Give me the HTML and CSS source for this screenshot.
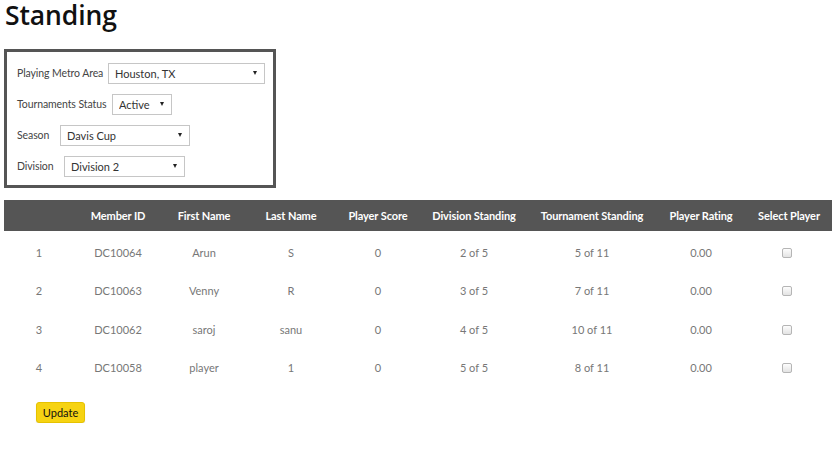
FILE: index.html
```html
<!DOCTYPE html>
<html lang="en">
<head>
<meta charset="utf-8">
<title>Standing</title>
<link rel="stylesheet" href="styles.css">
</head>
<body>
  <h1 class="page-title">Standing</h1>

  <form class="filters">
    <div class="filter-row">
      <label class="filter-label label-metro" for="metro">Playing Metro Area</label>
      <span class="select-wrap sel-metro">
        <select id="metro"><option>Houston, TX</option></select>
      </span>
    </div>
    <div class="filter-row">
      <label class="filter-label label-status" for="status">Tournaments Status</label>
      <span class="select-wrap sel-status">
        <select id="status"><option>Active</option></select>
      </span>
    </div>
    <div class="filter-row">
      <label class="filter-label label-season" for="season">Season</label>
      <span class="select-wrap sel-season">
        <select id="season"><option>Davis Cup</option></select>
      </span>
    </div>
    <div class="filter-row">
      <label class="filter-label label-division" for="division">Division</label>
      <span class="select-wrap sel-division">
        <select id="division"><option>Division 2</option></select>
      </span>
    </div>
  </form>

  <table class="standings">
    <colgroup>
      <col class="c-rank"><col class="c-id"><col class="c-first"><col class="c-last"><col class="c-score">
      <col class="c-div"><col class="c-tour"><col class="c-rating"><col class="c-select">
    </colgroup>
    <thead>
      <tr>
        <th></th>
        <th>Member ID</th>
        <th>First Name</th>
        <th>Last Name</th>
        <th>Player Score</th>
        <th>Division Standing</th>
        <th>Tournament Standing</th>
        <th>Player Rating</th>
        <th>Select Player</th>
      </tr>
    </thead>
    <tbody>
      <tr>
        <td>1</td><td>DC10064</td><td>Arun</td><td>S</td><td>0</td>
        <td>2 of 5</td><td>5 of 11</td><td>0.00</td><td><input type="checkbox" class="pick"></td>
      </tr>
      <tr>
        <td>2</td><td>DC10063</td><td>Venny</td><td>R</td><td>0</td>
        <td>3 of 5</td><td>7 of 11</td><td>0.00</td><td><input type="checkbox" class="pick"></td>
      </tr>
      <tr>
        <td>3</td><td>DC10062</td><td>saroj</td><td>sanu</td><td>0</td>
        <td>4 of 5</td><td>10 of 11</td><td>0.00</td><td><input type="checkbox" class="pick"></td>
      </tr>
      <tr>
        <td>4</td><td>DC10058</td><td>player</td><td>1</td><td>0</td>
        <td>5 of 5</td><td>8 of 11</td><td>0.00</td><td><input type="checkbox" class="pick"></td>
      </tr>
    </tbody>
  </table>

  <div class="actions">
    <button type="button" class="btn-update">Update</button>
  </div>
</body>
</html>
```

FILE: styles.css
```css
* {
  box-sizing: border-box;
}

body {
  margin: 0;
  padding: 0 6px 0 4px;
  font-family: Lato, "Liberation Sans", sans-serif;
  color: #333;
  background: #fff;
}

.page-title {
  margin: -2px 0 0;
  padding: 0 0 0 1px;
  font-family: "Open Sans", "Noto Sans", sans-serif;
  font-weight: 600;
  font-size: 26.5px;
  line-height: 34px;
  color: #111;
  letter-spacing: -0.1px;
}

/* filter panel */
.filters {
  margin-top: 17px;
  width: 272px;
  border: 3px solid #555;
  padding: 10px 8px 9px 10px;
  display: flex;
  flex-direction: column;
  gap: 10px;
}

.filter-row {
  display: flex;
  align-items: center;
  height: 21px;
}

.filter-label {
  font-size: 10.5px;
  color: #444;
  white-space: nowrap;
  letter-spacing: -0.1px;
}

.label-metro { width: 91px; }
.label-status { width: 95px; }
.label-season { width: 43px; }
.label-division { width: 47px; }

.select-wrap {
  position: relative;
  display: block;
  height: 21px;
}

.sel-metro { width: 157px; }
.sel-status { width: 60px; }
.sel-season { width: 130px; }
.sel-division { width: 121px; }

.select-wrap select {
  appearance: none;
  -webkit-appearance: none;
  width: 100%;
  height: 21px;
  margin: 0;
  border: 1px solid #c6c6c6;
  border-radius: 0;
  background: #fff;
  padding: 0 16px 0 6px;
  font-family: Lato, "Liberation Sans", sans-serif;
  font-size: 11px;
  color: #333;
}

/* small caret drawn over the right end of the select */
.select-wrap::after {
  content: "";
  position: absolute;
  right: 8px;
  top: 9px;
  border-left: 2.5px solid transparent;
  border-right: 2.5px solid transparent;
  border-top: 4px solid #222;
  pointer-events: none;
}

/* standings table */
.standings {
  margin-top: 12px;
  width: 828px;
  border-collapse: collapse;
  table-layout: fixed;
}

.c-rank { width: 70px; }
.c-id { width: 88px; }
.c-first { width: 84px; }
.c-last { width: 90px; }
.c-score { width: 84px; }
.c-div { width: 108px; }
.c-tour { width: 128px; }
.c-rating { width: 90px; }
.c-select { width: 86px; }

.standings th {
  background: #555;
  color: #fff;
  font-weight: 700;
  font-size: 11px;
  height: 31px;
  padding: 0;
  text-align: center;
  white-space: nowrap;
  letter-spacing: -0.1px;
}

.standings td {
  padding: 13.5px 0 10px;
  line-height: 15px;
  font-size: 11px;
  color: #777;
  text-align: center;
}

/* light grey checkbox */
.pick {
  appearance: none;
  -webkit-appearance: none;
  width: 10px;
  height: 10px;
  margin: 0;
  vertical-align: middle;
  position: relative;
  top: -1px;
  left: -2px;
  border: 1px solid #b5b5b5;
  border-radius: 2px;
  background: linear-gradient(#fdfdfd, #e3e3e3);
}

.actions {
  padding: 16px 0 0 32px;
}

.btn-update {
  height: 21px;
  width: 49px;
  padding: 0;
  border: 1px solid #e6c200;
  border-radius: 3px;
  background: #f6d312;
  font-family: Lato, "Liberation Sans", sans-serif;
  font-size: 11px;
  color: #111;
  box-shadow: 0 1px 1px rgba(0, 0, 0, 0.12);
}
```
